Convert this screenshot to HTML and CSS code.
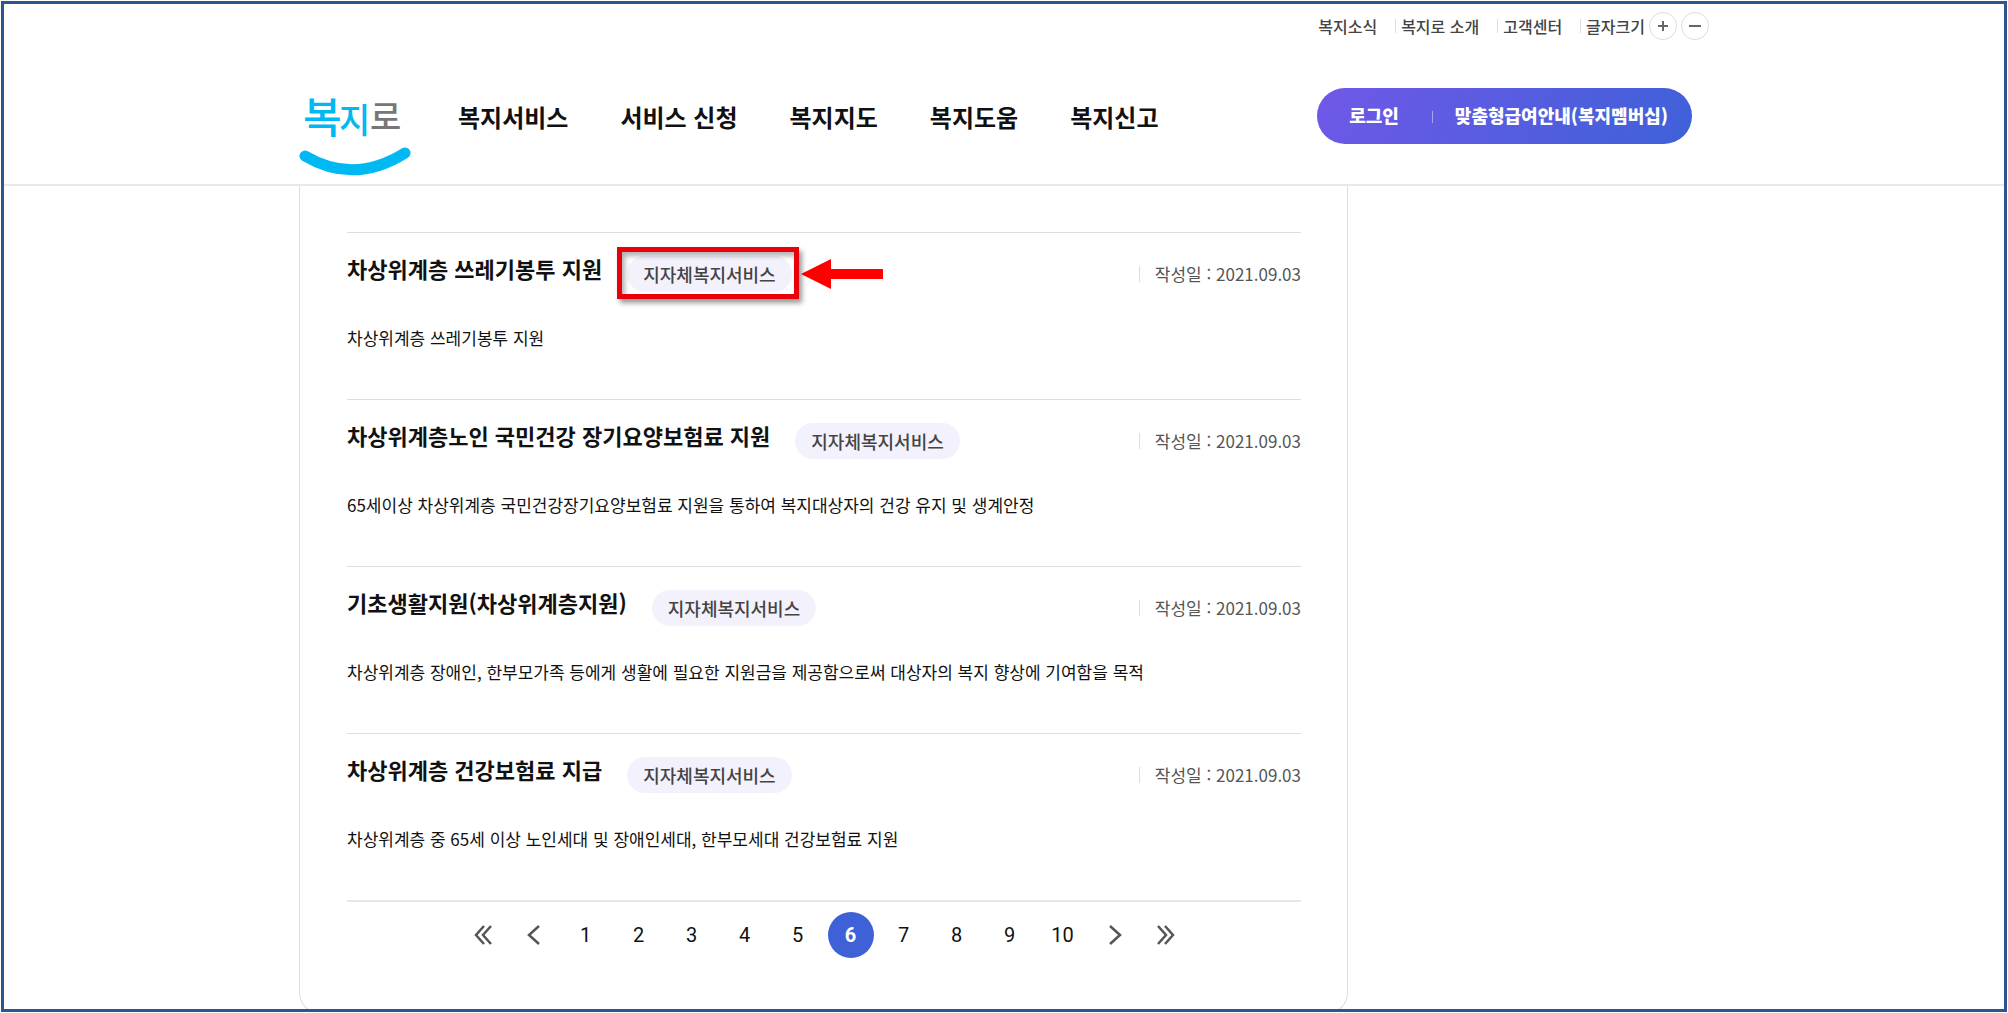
FILE: index.html
```html
<!DOCTYPE html>
<html lang="ko">
<head>
  <meta charset="UTF-8" />
  <title>복지로</title>
  <link rel="stylesheet" href="styles.css">
</head>
<body>
  <div class="frame">
    <header class="header">
      <div class="util">
        <a href="#">복지소식</a>
        <a href="#">복지로 소개</a>
        <a href="#">고객센터</a>
        <span class="font-size">글자크기
          <button type="button" aria-label="글자 크게"><svg width="12" height="12" viewBox="0 0 12 12"><path d="M6 1v10M1 6h10" /></svg></button>
          <button type="button" aria-label="글자 작게"><svg width="12" height="12" viewBox="0 0 12 12"><path d="M0 6h12" /></svg></button>
        </span>
      </div>
      <div class="gnb">
        <a href="#" class="logo">
          <svg width="112" height="100" viewBox="0 -8 112 100">
            <text x="4" y="47" font-size="42" fill="#00b9f2">복</text>
            <text x="40" y="47" font-size="34" fill="#00b9f2">지</text>
            <text x="71" y="44" font-size="34" fill="#777">로</text>
            <path d="M6 70Q55 99 106 67" fill="none" stroke="#00b9f2" stroke-width="11" stroke-linecap="round" />
          </svg>
        </a>
        <nav class="menu">
          <a href="#">복지서비스</a>
          <a href="#">서비스 신청</a>
          <a href="#">복지지도</a>
          <a href="#">복지도움</a>
          <a href="#">복지신고</a>
        </nav>
        <div class="member">
          <a href="#">로그인</a>
          <a href="#">맞춤형급여안내(복지멤버십)</a>
        </div>
      </div>
    </header>

    <main class="container">
      <section class="results">
        <ul class="list">
          <li class="item">
            <div class="item-head">
              <h2><a href="#">차상위계층 쓰레기봉투 지원</a></h2>
              <span class="badge marked">지자체복지서비스
                <svg class="arrow" width="82" height="30" viewBox="0 0 82 30"><path d="M0 15L30 0V10H82V20H30V30Z" fill="#f00" /></svg>
              </span>
              <span class="date">작성일 : 2021.09.03</span>
            </div>
            <p>차상위계층 쓰레기봉투 지원</p>
          </li>
          <li class="item">
            <div class="item-head">
              <h2><a href="#">차상위계층노인 국민건강 장기요양보험료 지원</a></h2>
              <span class="badge">지자체복지서비스</span>
              <span class="date">작성일 : 2021.09.03</span>
            </div>
            <p>65세이상 차상위계층 국민건강장기요양보험료 지원을 통하여 복지대상자의 건강 유지 및 생계안정</p>
          </li>
          <li class="item">
            <div class="item-head">
              <h2><a href="#">기초생활지원(차상위계층지원)</a></h2>
              <span class="badge">지자체복지서비스</span>
              <span class="date">작성일 : 2021.09.03</span>
            </div>
            <p>차상위계층 장애인, 한부모가족 등에게 생활에 필요한 지원금을 제공함으로써 대상자의 복지 향상에 기여함을 목적</p>
          </li>
          <li class="item">
            <div class="item-head">
              <h2><a href="#">차상위계층 건강보험료 지급</a></h2>
              <span class="badge">지자체복지서비스</span>
              <span class="date">작성일 : 2021.09.03</span>
            </div>
            <p>차상위계층 중 65세 이상 노인세대 및 장애인세대, 한부모세대 건강보험료 지원</p>
          </li>
        </ul>
        <nav class="paging">
          <a href="#" class="move" aria-label="처음"><svg width="18" height="20" viewBox="0 0 18 20"><path d="M10 1L2 10l8 9M17 1L9 10l8 9" /></svg></a>
          <a href="#" class="move" aria-label="이전"><svg width="18" height="20" viewBox="0 0 18 20"><path d="M14 1L4 10l10 9" /></svg></a>
          <a href="#">1</a>
          <a href="#">2</a>
          <a href="#">3</a>
          <a href="#">4</a>
          <a href="#">5</a>
          <a href="#" class="on" aria-current="page">6</a>
          <a href="#">7</a>
          <a href="#">8</a>
          <a href="#">9</a>
          <a href="#">10</a>
          <a href="#" class="move" aria-label="다음"><svg width="18" height="20" viewBox="0 0 18 20"><path d="M4 1l10 9-10 9" /></svg></a>
          <a href="#" class="move" aria-label="마지막"><svg width="18" height="20" viewBox="0 0 18 20"><path d="M1 1l8 9-8 9M8 1l8 9-8 9" /></svg></a>
        </nav>
      </section>
    </main>
  </div>
</body>
</html>
```
FILE: styles.css
```css
* {
  box-sizing: border-box;
}
body {
  margin: 0;
  padding: 1px;
  background: #fff;
  color: #111;
  font-family: "Noto Sans CJK KR", "Noto Sans", sans-serif;
  font-size: 18px;
}
a {
  color: inherit;
  text-decoration: none;
}
.frame {
  height: calc(100vh - 2px);
  border: 3px solid #2f5591;
  overflow: hidden;
}

/* header */
.header {
  border-bottom: 2px solid #e9e9e9;
}
.util, .gnb, .container {
  max-width: 1410px;
  margin: 0 auto;
}
.util {
  display: flex;
  justify-content: flex-end;
  align-items: center;
  height: 44px;
  color: #444;
  font-size: 16px;
  font-weight: 500;
}
.util a {
  display: flex;
  align-items: center;
}
.util a::after {
  content: "";
  width: 1px;
  height: 14px;
  margin: 0 5px 0 18px;
  background: #ddd;
}
.font-size {
  display: flex;
  align-items: center;
  gap: 4px;
}
.font-size button {
  display: flex;
  align-items: center;
  justify-content: center;
  width: 28px;
  height: 28px;
  padding: 0;
  border: 1px solid #ddd;
  border-radius: 50%;
  background: #fff;
}
.font-size svg {
  fill: none;
  stroke: #666;
  stroke-width: 2;
}
.gnb {
  display: flex;
  align-items: center;
  height: 136px;
  padding-right: 17px;
}
.logo {
  margin-right: 47px;
  padding-top: 24px;
}
.logo svg {
  display: block;
}
.logo text {
  font-weight: 500;
}
.menu {
  display: flex;
  gap: 52px;
  font-size: 24px;
  font-weight: 700;
}
.member {
  display: flex;
  align-items: center;
  height: 56px;
  margin-left: auto;
  padding: 0 24px 2px 32px;
  border-radius: 28px;
  background: linear-gradient(120deg, #7058e8, #3e61d8);
  color: #fff;
  font-weight: 900;
}
.member a + a::before {
  content: "";
  display: inline-block;
  width: 1px;
  height: 12px;
  margin: 0 22px 0 33px;
  background: #a5a5f0;
}

/* result list */
.results {
  width: 1049px;
  max-width: 100%;
  padding: 46px 46px 54px 47px;
  border: 1px solid #ddd;
  border-top: 0;
  border-radius: 0 0 20px 20px;
}
.list {
  margin: 0;
  padding: 0;
  list-style: none;
  border-bottom: 2px solid #e6e6e6;
}
.item {
  height: 167px;
  border-top: 1px solid #ddd;
  padding-top: 17px;
}
.item-head {
  display: flex;
  align-items: flex-start;
}
.item h2 {
  margin: 0;
  font-size: 22px;
  line-height: 36px;
  font-weight: 700;
}
.badge {
  position: relative;
  height: 36px;
  margin: 6px 0 0 25px;
  padding: 0 16px;
  border-radius: 18px;
  background: #f3f2fc;
  color: #444;
  line-height: 36px;
  font-weight: 500;
}
/* callout box and arrow over the badge */
.marked::after {
  content: "";
  position: absolute;
  inset: -9px -7px -7px -10px;
  border: 5px solid #e8000b;
  box-shadow: 3px 4px 5px rgba(0, 0, 0, 0.4), inset 3px 4px 5px rgba(0, 0, 0, 0.3);
}
.arrow {
  position: absolute;
  left: calc(100% + 9px);
  top: 3px;
}
.date {
  display: flex;
  align-items: center;
  margin: 6px 0 0 auto;
  color: #555;
  font-size: 17px;
  line-height: 36px;
}
.date::before {
  content: "";
  width: 1px;
  height: 16px;
  margin-right: 15px;
  background: #ddd;
}
.item p {
  margin: 30px 0 0;
  font-size: 17px;
  line-height: 32px;
}

/* paging */
.paging {
  display: flex;
  justify-content: center;
  gap: 7px;
  margin-top: 10px;
  font-family: Roboto, sans-serif;
  font-size: 20px;
}
.paging a {
  display: flex;
  align-items: center;
  justify-content: center;
  width: 46px;
  height: 46px;
  border-radius: 50%;
}
.paging .move {
  width: 44px;
}
.paging .on {
  background: #3f61d8;
  color: #fff;
  font-weight: 700;
}
.paging svg {
  fill: none;
  stroke: #555;
  stroke-width: 2.5;
}
```
